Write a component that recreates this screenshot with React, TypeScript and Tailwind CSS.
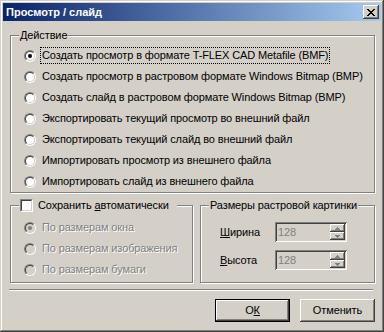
import React from 'react';

const raised =
    'shadow-[inset_-1px_-1px_0_#404040,inset_1px_1px_0_#ffffff,inset_-2px_-2px_0_#808080,inset_2px_2px_0_#d4d0c8]';
const sunken =
    'shadow-[inset_1px_1px_0_#808080,inset_-1px_-1px_0_#ffffff,inset_2px_2px_0_#404040,inset_-2px_-2px_0_#d4d0c8]';
const etched = 'border border-[#808080] shadow-[inset_1px_1px_0_#ffffff,1px_1px_0_#ffffff]';

const Radio: React.FC<{ checked?: boolean; disabled?: boolean }> = ({ checked, disabled }) => (
    <div className="w-3 h-3 shrink-0 rounded-full border border-t-[#808080] border-l-[#808080] border-r-white border-b-white">
        <div
            className={`w-full h-full rounded-full border border-t-[#404040] border-l-[#404040] border-r-[#d4d0c8] border-b-[#d4d0c8] flex items-center justify-center ${
                disabled ? 'bg-[#d4d0c8]' : 'bg-white'
            }`}
        >
            {checked && <div className={`w-1 h-1 rounded-full ${disabled ? 'bg-[#808080]' : 'bg-black'}`} />}
        </div>
    </div>
);

const actions = [
    'Создать просмотр в формате T-FLEX CAD Metafile (BMF)',
    'Создать просмотр в растровом формате Windows Bitmap (BMP)',
    'Создать слайд в растровом формате Windows Bitmap (BMP)',
    'Экспортировать текущий просмотр во внешний файл',
    'Экспортировать текущий слайд во внешний файл',
    'Импортировать просмотр из внешнего файла',
    'Импортировать слайд из внешнего файла',
];

const sizes = ['По размерам окна', 'По размерам изображения', 'По размерам бумаги'];

const Spin: React.FC<{ value: string }> = ({ value }) => (
    <div className={`w-[72px] h-[20px] bg-[#d4d0c8] p-[2px] flex ${sunken}`}>
        <span className="flex-1 pl-[1px] leading-[16px] text-[#808080]">{value}</span>
        <div className="w-[15px] flex flex-col">
            {[0, 1].map((i) => (
                <div key={i} className={`h-[8px] flex items-center justify-center bg-[#d4d0c8] ${raised}`}>
                    <svg width="5" height="3" viewBox="0 0 5 3" shapeRendering="crispEdges">
                        {i === 0 ? (
                            <path d="M2 0h1v1h1v1h1v1H0V2h1V1h1z" fill="#808080" />
                        ) : (
                            <path d="M0 0h5v1H4v1H3v1H2V2H1V1H0z" fill="#808080" />
                        )}
                    </svg>
                </div>
            ))}
        </div>
    </div>
);

export default function App() {
    return (
        <div
            className={`w-[384px] h-[332px] bg-[#d4d0c8] p-[3px] flex flex-col text-[11px] leading-[13px] tracking-[-0.12px] text-black font-['Liberation_Sans',Arial,sans-serif] shadow-[inset_-1px_-1px_0_#404040,inset_1px_1px_0_#d4d0c8,inset_-2px_-2px_0_#808080,inset_2px_2px_0_#ffffff]`}
        >
            {/* title bar */}
            <div className="h-[18px] flex items-center justify-between pl-[3px] pr-[2px] bg-[linear-gradient(to_right,#0a246a,#a6caf0)]">
                <span className="font-bold text-white tracking-normal">Просмотр / слайд</span>
                <div className={`w-[16px] h-[14px] bg-[#d4d0c8] flex items-center justify-center ${raised}`}>
                    <svg width="8" height="7" viewBox="0 0 8 7" shapeRendering="crispEdges">
                        <path
                            d="M0 0h2v1H0zM6 0h2v1H6zM1 1h2v1H1zM5 1h2v1H5zM2 2h4v1H2zM3 3h2v1H3zM2 4h4v1H2zM1 5h2v1H1zM5 5h2v1H5zM0 6h2v1H0zM6 6h2v1H6z"
                            fill="#000"
                        />
                    </svg>
                </div>
            </div>

            <div className="flex flex-col pl-[7px] pr-[6px] pt-[14px]">
                {/* Действие */}
                <div className={`relative h-[158px] ${etched}`}>
                    <span className="absolute left-[8px] top-[-7px] px-[1px] bg-[#d4d0c8]">Действие</span>
                    <div className="flex flex-col pt-[9px] pl-[13px]">
                        {actions.map((a, i) => (
                            <div key={a} className="h-[21px] flex items-center gap-[4px]">
                                <Radio checked={i === 0} />
                                <span
                                    className={`px-[1px] py-[1px] border ${
                                        i === 0 ? 'border-dotted border-black' : 'border-transparent'
                                    }`}
                                >
                                    {a}
                                </span>
                            </div>
                        ))}
                    </div>
                </div>

                <div className="flex gap-[7px] mt-[12px]">
                    {/* Сохранить автоматически */}
                    <div className={`relative w-[183px] h-[78px] ${etched}`}>
                        <div className="absolute left-[8px] top-[-7px] pl-[1px] pr-[8px] bg-[#d4d0c8] flex items-center gap-[5px]">
                            <div className="w-[13px] h-[13px] border border-t-[#808080] border-l-[#808080] border-r-white border-b-white">
                                <div className="w-full h-full bg-white border border-t-[#404040] border-l-[#404040] border-r-[#d4d0c8] border-b-[#d4d0c8]" />
                            </div>
                            <span>
                                Сохранить <u>а</u>втоматически
                            </span>
                        </div>
                        <div className="flex flex-col pt-[11px] pl-[13px]">
                            {sizes.map((s, i) => (
                                <div key={s} className="h-[21px] flex items-center gap-[6px]">
                                    <Radio checked={i === 0} disabled />
                                    <span className="text-[#808080] [text-shadow:1px_1px_0_#ffffff]">{s}</span>
                                </div>
                            ))}
                        </div>
                    </div>

                    {/* Размеры растровой картинки */}
                    <div className={`relative flex-1 h-[78px] ${etched}`}>
                        <span className="absolute left-[8px] top-[-7px] px-[1px] bg-[#d4d0c8]">
                            Размеры растровой картинки
                        </span>
                        <div className="flex flex-col gap-[8px] pt-[16px] pl-[19px]">
                            <div className="flex items-center">
                                <span className="w-[55px]">
                                    <u>Ш</u>ирина
                                </span>
                                <Spin value="128" />
                            </div>
                            <div className="flex items-center">
                                <span className="w-[55px]">
                                    <u>В</u>ысота
                                </span>
                                <Spin value="128" />
                            </div>
                        </div>
                    </div>
                </div>

                <div className="mt-[6px] ml-[-1px] mr-[2px] h-[2px] border-t border-[#808080] border-b border-b-white" />

                <div className="flex justify-end gap-[10px] mt-[8px]">
                    <div className="w-[75px] h-[23px] border border-black">
                        <div className={`w-full h-full flex items-center justify-center bg-[#d4d0c8] ${raised}`}>
                            <span>
                                О<u>К</u>
                            </span>
                        </div>
                    </div>
                    <div className={`w-[75px] h-[23px] flex items-center justify-center bg-[#d4d0c8] ${raised}`}>
                        Отменить
                    </div>
                </div>
            </div>
        </div>
    );
}
